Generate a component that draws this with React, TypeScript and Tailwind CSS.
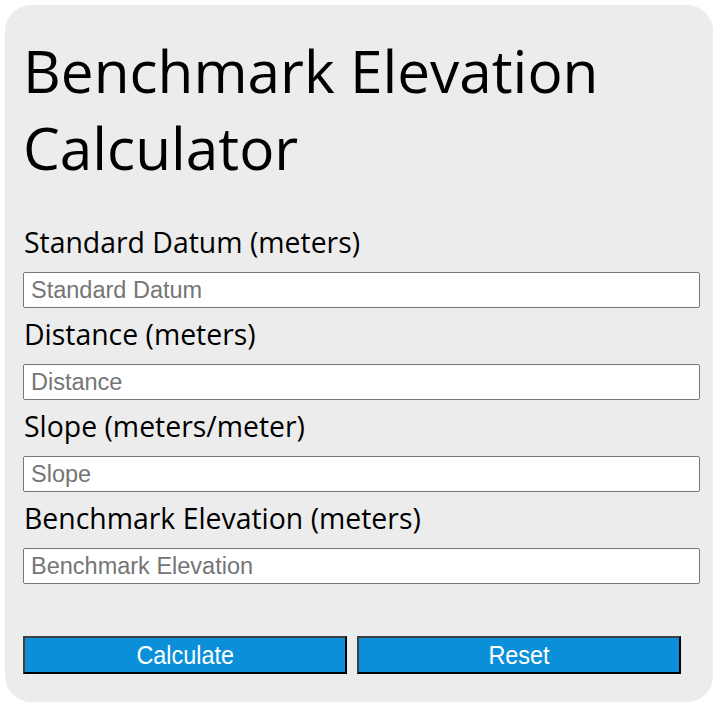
export default function App() {
  const fields = [
    { label: 'Standard Datum (meters)', placeholder: 'Standard Datum' },
    { label: 'Distance (meters)', placeholder: 'Distance' },
    { label: 'Slope (meters/meter)', placeholder: 'Slope' },
    { label: 'Benchmark Elevation (meters)', placeholder: 'Benchmark Elevation' },
  ];

  return (
    <div className="min-h-screen bg-white pt-[5px] pl-[5px] pr-[7px]">
      <div className="rounded-[26px] bg-[#ececec] pl-[18px] pr-[13px] pt-[27px] pb-[28px] font-['Open_Sans',sans-serif] text-black">
        <h1 className="text-[58.5px] leading-[77px] font-normal">
          Benchmark Elevation Calculator
        </h1>

        <div className="mt-[39px]">
          {fields.map((f) => (
            <div key={f.label}>
              <label className="block text-[28.4px] leading-[35px] pl-[1px]">{f.label}</label>
              <input
                type="text"
                placeholder={f.placeholder}
                className="mt-[12px] mb-[9px] block h-[36px] w-full rounded-[2px] border border-[#767676] bg-white px-[7px] font-['Liberation_Sans',Arial,sans-serif] text-[23.5px] placeholder:text-[#757575] outline-none"
              />
            </div>
          ))}
        </div>

        <div className="mt-[52px] flex gap-[10px] pr-[19px]">
          <button className="flex h-[38px] flex-1 items-center justify-center border-2 border-t-[#3f3f3f] border-l-[#3f3f3f] border-b-black border-r-black bg-[#0a8fd8] text-white">
            <span className="inline-block scale-x-90 font-['Liberation_Sans',Arial,sans-serif] text-[26px]">Calculate</span>
          </button>
          <button className="flex h-[38px] flex-1 items-center justify-center border-2 border-t-[#3f3f3f] border-l-[#3f3f3f] border-b-black border-r-black bg-[#0a8fd8] text-white">
            <span className="inline-block scale-x-90 font-['Liberation_Sans',Arial,sans-serif] text-[26px]">Reset</span>
          </button>
        </div>
      </div>
    </div>
  );
}
